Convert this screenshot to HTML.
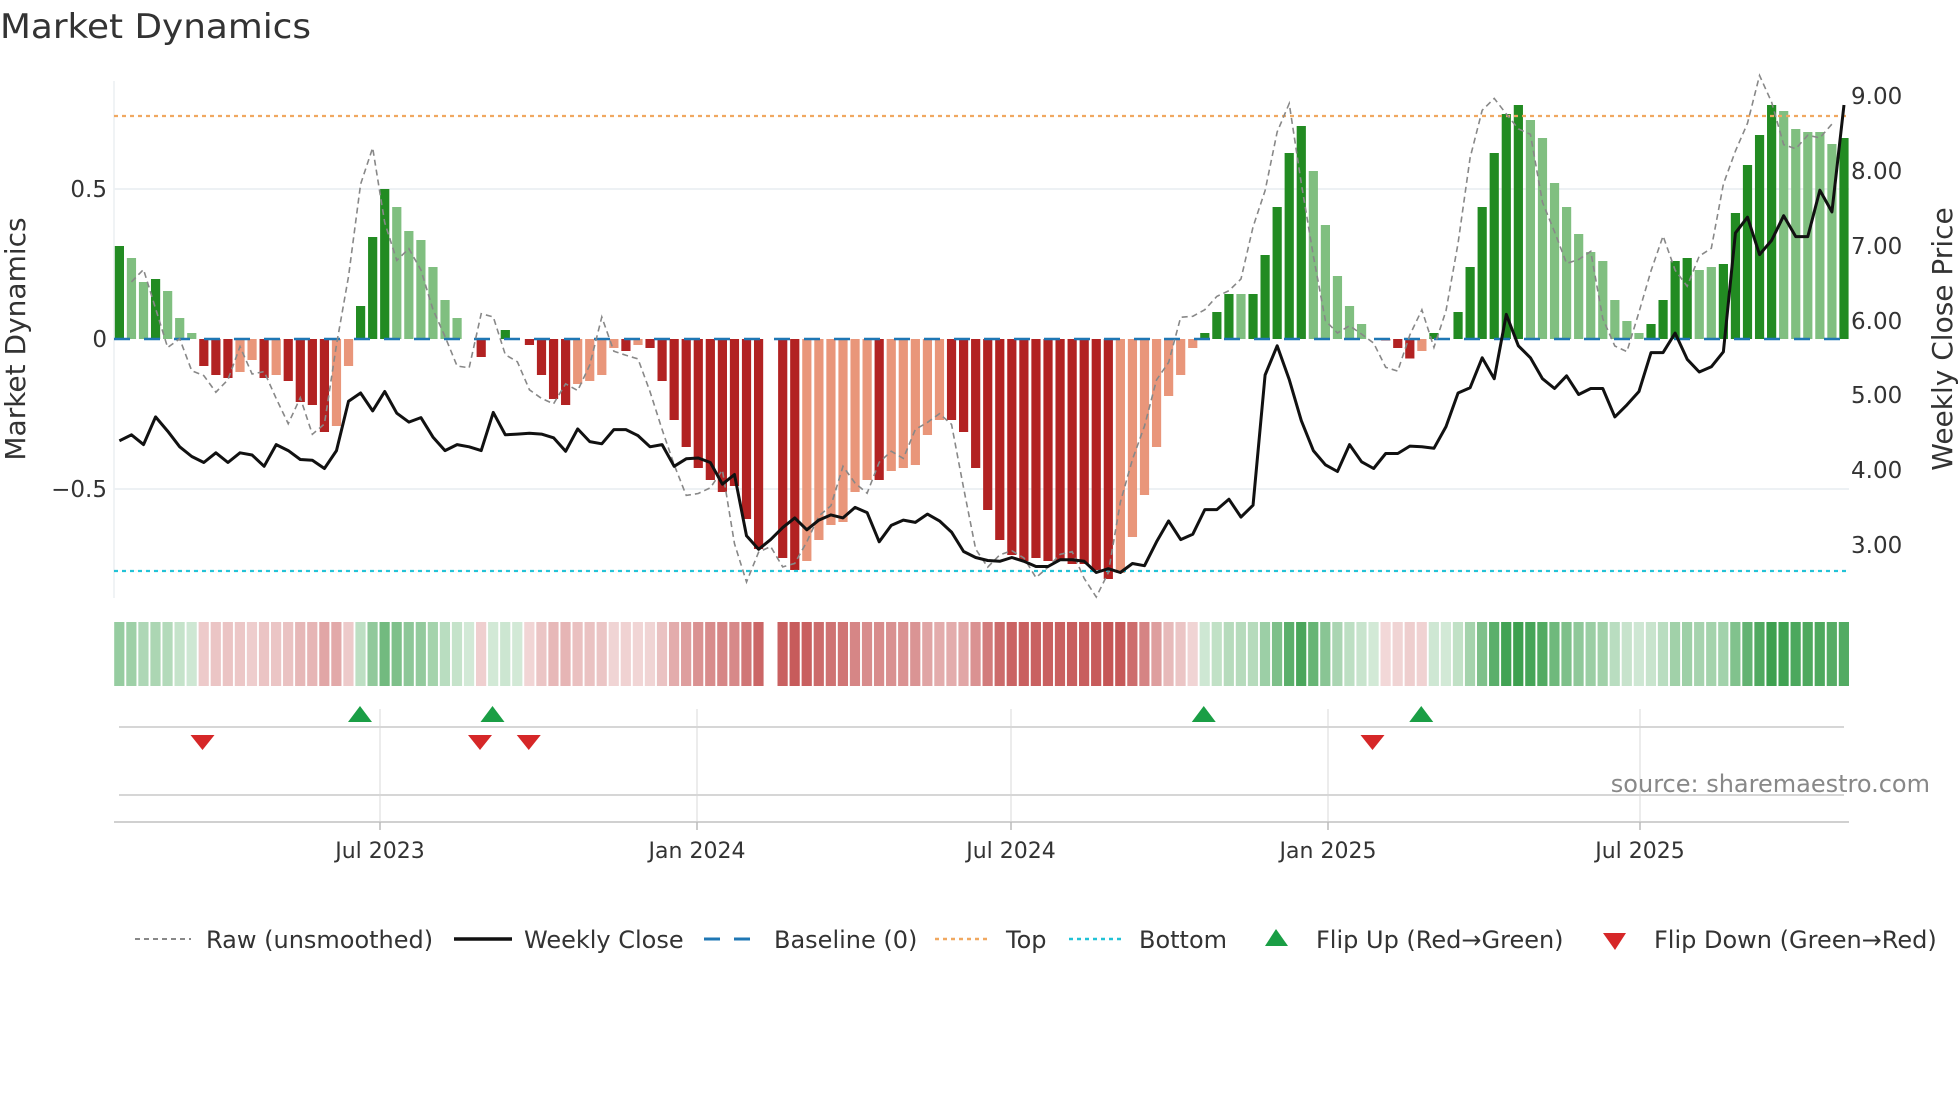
<!DOCTYPE html>
<html><head><meta charset="utf-8"><style>
html,body{margin:0;padding:0;background:#fff;width:1960px;height:1102px;overflow:hidden}
svg{display:block;font-family:"DejaVu Sans","Liberation Sans",sans-serif}
</style></head><body>
<svg id="s" width="1960" height="1102" viewBox="0 0 1960 1102" xmlns="http://www.w3.org/2000/svg">
<text x="0" y="38" font-size="34" fill="#333" textLength="311" lengthAdjust="spacingAndGlyphs">Market Dynamics</text>
<line x1="114" y1="81" x2="114" y2="598" stroke="#eceff2" stroke-width="1.5"/>
<line x1="114" y1="189" x2="1849" y2="189" stroke="#edf1f4" stroke-width="2"/>
<line x1="114" y1="489" x2="1849" y2="489" stroke="#edf1f4" stroke-width="2"/>
<g id="bars"></g>
<line x1="114" y1="339" x2="1849" y2="339" stroke="#1f77b4" stroke-width="2.5" stroke-dasharray="16,14"/>
<line x1="114" y1="116" x2="1849" y2="116" stroke="#f0a860" stroke-width="2.2" stroke-dasharray="4,4"/>
<line x1="114" y1="571" x2="1849" y2="571" stroke="#22c2d6" stroke-width="2.2" stroke-dasharray="4,4"/>
<polyline id="raw" fill="none" stroke="#888" stroke-width="1.6" stroke-dasharray="6,4"/>
<polyline id="price" fill="none" stroke="#111" stroke-width="3" stroke-linejoin="round"/>
<g font-size="23" fill="#333" text-anchor="end">
<text x="107" y="197">0.5</text><text x="107" y="347">0</text><text x="107" y="497">−0.5</text>
</g>
<g font-size="23" fill="#333">
<text x="1851" y="104">9.00</text><text x="1851" y="179">8.00</text><text x="1851" y="254">7.00</text><text x="1851" y="329">6.00</text><text x="1851" y="403">5.00</text><text x="1851" y="478">4.00</text><text x="1851" y="553">3.00</text>
</g>
<text transform="translate(25,339) rotate(-90)" font-size="28" fill="#333" text-anchor="middle">Market Dynamics</text>
<text transform="translate(1952,339) rotate(-90)" font-size="28" fill="#333" text-anchor="middle">Weekly Close Price</text>
<g id="strip"></g>
<g stroke="#e6e6e6" stroke-width="1.5">
<line x1="380" y1="709" x2="380" y2="822"/><line x1="697" y1="709" x2="697" y2="822"/><line x1="1011" y1="709" x2="1011" y2="822"/><line x1="1328" y1="709" x2="1328" y2="822"/><line x1="1640" y1="709" x2="1640" y2="822"/>
</g>
<line x1="119" y1="727" x2="1844" y2="727" stroke="#d6d6d6" stroke-width="2"/>
<line x1="119" y1="795" x2="1844" y2="795" stroke="#d6d6d6" stroke-width="2"/>
<line x1="114" y1="822" x2="1849" y2="822" stroke="#d0d0d0" stroke-width="2"/>
<g stroke="#bbb" stroke-width="1.5">
<line x1="380" y1="822" x2="380" y2="830"/><line x1="697" y1="822" x2="697" y2="830"/><line x1="1011" y1="822" x2="1011" y2="830"/><line x1="1328" y1="822" x2="1328" y2="830"/><line x1="1640" y1="822" x2="1640" y2="830"/>
</g>
<g id="flips"></g>
<g font-size="22" fill="#333" text-anchor="middle">
<text x="380" y="858">Jul 2023</text><text x="697" y="858">Jan 2024</text><text x="1011" y="858">Jul 2024</text><text x="1328" y="858">Jan 2025</text><text x="1640" y="858">Jul 2025</text>
</g>
<text x="1930" y="792" font-size="24" fill="#888" text-anchor="end">source: sharemaestro.com</text>
<g font-size="24" fill="#333">
<line x1="135" y1="939" x2="191" y2="939" stroke="#888" stroke-width="2" stroke-dasharray="5,4"/>
<text x="206" y="948">Raw (unsmoothed)</text>
<line x1="454" y1="939" x2="512" y2="939" stroke="#111" stroke-width="3.5"/>
<text x="524" y="948">Weekly Close</text>
<line x1="704" y1="939" x2="758" y2="939" stroke="#1f77b4" stroke-width="3" stroke-dasharray="16,14"/>
<text x="774" y="948">Baseline (0)</text>
<line x1="935" y1="939" x2="990" y2="939" stroke="#f0a860" stroke-width="2.5" stroke-dasharray="4,4"/>
<text x="1006" y="948">Top</text>
<line x1="1069" y1="939" x2="1124" y2="939" stroke="#22c2d6" stroke-width="2.5" stroke-dasharray="4,4"/>
<text x="1139" y="948">Bottom</text>
<polygon points="1276,929 1265,946 1288,946" fill="#1a9e45"/>
<text x="1316" y="948">Flip Up (Red→Green)</text>
<polygon points="1603,933 1626,933 1615,950" fill="#d62728"/>
<text x="1654" y="948">Flip Down (Green→Red)</text>
</g>
</svg>
<script>
var V=[[.31,1],[.27,0],[.19,0],[.20,1],[.16,0],[.07,0],[.02,0],[-.09,1],[-.12,1],[-.13,1],[-.11,0],[-.07,0],[-.13,1],[-.12,0],[-.14,1],[-.21,1],[-.22,1],[-.31,1],[-.29,0],[-.09,0],
[.11,1],[.34,1],[.50,1],[.44,0],[.36,0],[.33,0],[.24,0],[.13,0],[.07,0],[0,0],[-.06,1],[0,0],[.03,1],[0,0],[-.02,1],[-.12,1],[-.20,1],[-.22,1],[-.15,0],[-.14,0],
[-.12,0],[-.03,0],[-.04,1],[-.02,0],[-.03,1],[-.14,1],[-.27,1],[-.36,1],[-.43,1],[-.47,1],[-.51,1],[-.49,1],[-.60,1],[-.70,1],null,[-.73,1],[-.77,1],[-.74,0],[-.67,0],[-.62,0],
[-.61,0],[-.51,0],[-.47,0],[-.47,1],[-.44,0],[-.43,0],[-.42,0],[-.32,0],[-.27,0],[-.27,1],[-.31,1],[-.43,1],[-.57,1],[-.67,1],[-.72,1],[-.74,1],[-.73,1],[-.74,1],[-.74,1],[-.75,1],
[-.75,1],[-.77,1],[-.80,1],[-.78,0],[-.66,0],[-.52,0],[-.36,0],[-.19,0],[-.12,0],[-.03,0],[.02,1],[.09,1],[.15,1],[.15,0],[.15,1],[.28,1],[.44,1],[.62,1],[.71,1],[.56,0],
[.38,0],[.21,0],[.11,0],[.05,0],[0,0],[-.005,1],[-.03,1],[-.065,1],[-.04,0],[.02,1],[0,0],[.09,1],[.24,1],[.44,1],[.62,1],[.75,1],[.78,1],[.73,0],[.67,0],[.52,0],
[.44,0],[.35,0],[.29,0],[.26,0],[.13,0],[.06,0],[.02,0],[.05,1],[.13,1],[.26,1],[.27,1],[.23,0],[.24,0],[.25,1],[.42,1],[.58,1],[.68,1],[.78,1],[.76,0],[.70,0],
[.69,0],[.69,0],[.65,0],[.67,1]];
var P=[4.39,4.47,4.34,4.71,4.52,4.31,4.18,4.1,4.23,4.1,4.23,4.2,4.05,4.34,4.26,4.14,4.13,4.02,4.26,4.92,5.03,4.79,5.05,4.76,4.64,4.7,4.44,4.26,4.34,4.31,4.26,4.77,4.47,4.48,4.49,4.48,4.43,4.25,4.55,4.38,4.35,4.54,4.54,4.46,4.31,4.34,4.05,4.15,4.16,4.1,3.81,3.94,3.12,2.94,3.07,3.23,3.36,3.2,3.33,3.4,3.36,3.5,3.43,3.04,3.26,3.33,3.3,3.41,3.32,3.17,2.91,2.83,2.79,2.78,2.83,2.78,2.71,2.71,2.8,2.8,2.78,2.63,2.68,2.63,2.75,2.72,3.04,3.32,3.07,3.14,3.47,3.47,3.61,3.37,3.53,5.27,5.66,5.21,4.66,4.26,4.07,3.98,4.34,4.11,4.02,4.22,4.22,4.32,4.31,4.29,4.58,5.03,5.1,5.5,5.22,6.08,5.66,5.5,5.22,5.09,5.26,5.01,5.09,5.09,4.71,4.87,5.05,5.57,5.57,5.83,5.48,5.31,5.38,5.58,7.17,7.38,6.88,7.07,7.4,7.12,7.12,7.74,7.45,8.88];
var NS="http://www.w3.org/2000/svg";
function el(p,t,a){var e=document.createElementNS(NS,t);for(var k in a)e.setAttribute(k,a[k]);p.appendChild(e);return e;}
var bars=document.getElementById('bars'),strip=document.getElementById('strip');
function X(i){return 119.4+i*12.06;}
function Y(v){return 339-v*300;}
var rawPts=[],pPts=[];
for(var i=0;i<144;i++){
 var d=V[i];
 if(d){var v=d[0],c;
  if(v>=0)c=d[1]?'#228b22':'#80bf80';else c=d[1]?'#b22222':'#e9967a';
  var y=Math.min(Y(v),339),h=Math.abs(v*300);
  if(h>0.5)el(bars,'rect',{x:X(i)-4.6,y:y,width:9.2,height:h,fill:c});
  var a=0.22+0.75*Math.min(Math.abs(v)/0.8,1);
  var sc=v>=0?'rgba(40,150,60,'+(a*0.95)+')':'rgba(185,50,50,'+(a*0.85)+')';
  el(strip,'rect',{x:X(i)-5.2,y:622,width:10.2,height:64,fill:sc});
 }
 var cur=d?d[0]:-0.72,nx=V[i+1]?V[i+1][0]:cur;
 var r=cur+(nx-cur)*1.6+0.05*Math.sin(i*1.3);
 r=Math.max(-0.86,Math.min(0.88,r));
 if(i>0&&i<143)rawPts.push(X(i)+','+Y(r).toFixed(1));
 pPts.push(X(i)+','+(96+(9-P[i])*74.8).toFixed(1));
}
document.getElementById('raw').setAttribute('points',rawPts.join(' '));
document.getElementById('price').setAttribute('points',pPts.join(' '));
var f=document.getElementById('flips');
[288,394,963,1137].forEach(function(x){x*=1.25;el(f,'polygon',{points:(x)+',706 '+(x-12)+',722 '+(x+12)+',722',fill:'#1a9e45'});});
[162,384,423,1098].forEach(function(x){x*=1.25;el(f,'polygon',{points:(x-12)+',735 '+(x+12)+',735 '+x+',750',fill:'#d62728'});});
</script>
</body></html>
